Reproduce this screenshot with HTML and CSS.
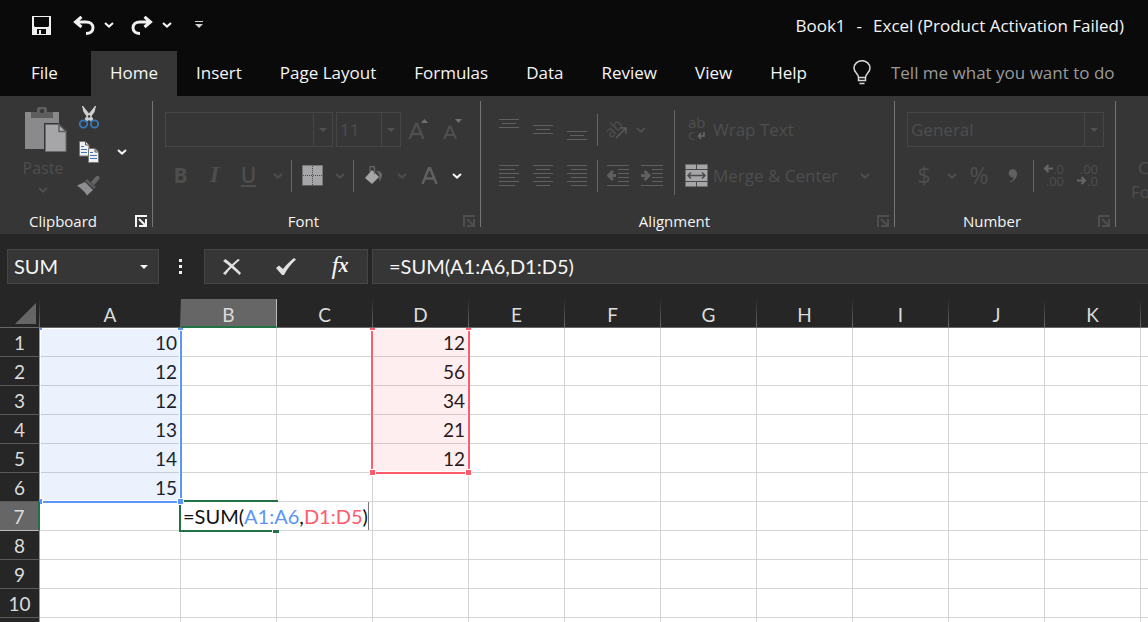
FILE: index.html
```html
<!DOCTYPE html>
<html lang="en">
  <head>
    <meta charset="UTF-8" />
    <meta name="viewport" content="width=device-width, initial-scale=1.0" />
    <title>Book1 - Excel</title>
    <link rel="stylesheet" href="styles.css">
  </head>
  <body>
    <!-- shared icons -->
    <svg class="sprite" width="0" height="0" aria-hidden="true">
      <symbol id="chevron" viewBox="0 0 10 6">
        <path d="M1 1l4 3.600L9 1" fill="none" stroke="currentColor" stroke-width="2" />
      </symbol>
      <symbol id="triangle" viewBox="0 0 8 4">
        <path d="M0 0h8L4 4z" fill="currentColor" />
      </symbol>
      <symbol id="launcher" viewBox="0 0 12 12">
        <path d="M1 12V1h11M4 4l6 6M11 4v7H4" fill="none" stroke="currentColor" stroke-width="2" />
      </symbol>
    </svg>

    <header class="titlebar">
      <div class="quick-access">
        <button class="quick save" aria-label="Save">
          <svg width="19" height="19" viewBox="0 0 19 19">
            <path fill="#f0f0f0" fill-rule="evenodd" d="M0 0h19v19H0zM2 1v9l1 1h13l1-1V1zM5 13v5h2v-4h2v4h5v-5z" />
          </svg>
        </button>
        <button class="quick" aria-label="Undo">
          <svg width="22" height="19" viewBox="0 0 22 19">
            <path d="M2 6h11c4.500 0 7 2.500 7 5.800 0 3.600-3 5.700-7 5.700M8.500 0.800L2.500 6l6 5" fill="none" stroke="#f0f0f0" stroke-width="3" />
          </svg>
        </button>
        <button class="quick" aria-label="Undo list">
          <svg width="10" height="6"><use href="#chevron" /></svg>
        </button>
        <button class="quick redo" aria-label="Redo">
          <svg width="22" height="19" viewBox="0 0 22 19">
            <path d="M20 6H9c-4.500 0-7 2.500-7 5.800 0 3.600 3 5.700 7 5.700M13.500 0.800l6 5.200-6 5" fill="none" stroke="#f0f0f0" stroke-width="3" />
          </svg>
        </button>
        <button class="quick" aria-label="Redo list">
          <svg width="10" height="6"><use href="#chevron" /></svg>
        </button>
        <button class="quick customize" aria-label="Customize Quick Access Toolbar">
          <svg width="8" height="8" viewBox="0 0 8 8">
            <path d="M0 0h8v1H0zM0 3h8L4 7z" fill="#d0d0d0" />
          </svg>
        </button>
      </div>
      <div class="title"><span>Book1</span><span>-</span><span>Excel (Product Activation Failed)</span></div>
    </header>

    <nav class="tabs">
      <a href="#" class="tab file">File</a>
      <a href="#" class="tab active">Home</a>
      <a href="#" class="tab">Insert</a>
      <a href="#" class="tab">Page Layout</a>
      <a href="#" class="tab">Formulas</a>
      <a href="#" class="tab">Data</a>
      <a href="#" class="tab">Review</a>
      <a href="#" class="tab">View</a>
      <a href="#" class="tab">Help</a>
      <label class="tell-me" for="tellMe">
        <svg width="18" height="25" viewBox="0 0 18 25">
          <path d="M5.500 17.500c0-4-4.500-4.500-4.500-9.500a8 7.300 0 0 1 16 0c0 5-4.500 5.500-4.500 9.500zM5.500 17v3.500h7V17M6.500 23.500h5" fill="none" stroke="#d8d8d8" stroke-width="1.500" />
        </svg>
        <input type="text" id="tellMe" placeholder="Tell me what you want to do" />
      </label>
    </nav>

    <section class="ribbon">
      <div class="group clipboard">
        <div class="group-body">
          <button class="paste" disabled>
            <svg width="42" height="46" viewBox="0 0 42 46">
              <path d="M0 5h34v37H0z" fill="#8a8a8c" />
              <path d="M6 5h6V1.500L13.500 0h7L22 1.500V5h6v6H6z" fill="#5e5e5e" />
              <circle cx="17" cy="4" r="2" fill="#363636" />
              <path d="M19 16h16l7 7v23H19z" fill="#363636" />
              <path d="M20.500 17.500H34V24h7v20.500H20.500z" fill="#a6a6a8" />
              <path d="M34 17.500v7h7z" fill="#b4b4b4" stroke="#5e5e5e" stroke-width="1.500" />
              <path d="M20.500 17.500H34M41 24v20.500H20.500v-27" fill="none" stroke="#6a6a6a" />
            </svg>
            <span>Paste</span>
            <svg width="10" height="6"><use href="#chevron" /></svg>
          </button>
          <div class="clip-tools">
            <button aria-label="Cut">
              <svg width="20" height="23" viewBox="0 0 20 23">
                <path d="M3.500 0L5 6l6.500 9 2.500-2zM16.500 0L15 6l-6.500 9L6 13z" fill="#d0d0d0" stroke="#d0d0d0" />
                <circle cx="4.500" cy="18" r="3.700" fill="#363636" stroke="#3a78b8" stroke-width="1.800" />
                <circle cx="15.500" cy="18" r="3.700" fill="#363636" stroke="#3a78b8" stroke-width="1.800" />
              </svg>
            </button>
            <button class="copy" aria-label="Copy">
              <svg width="20" height="22" viewBox="0 0 20 22">
                <path d="M.5.5h6l3.500 3.500v11H.5z" fill="#f0f0f0" stroke="#777" />
                <path d="M6.500.5V4H10" fill="none" stroke="#555" />
                <path d="M2 5.500h3M2 8.500h6M2 11.500h6" stroke="#3a78b8" />
                <path d="M9.500 7.500h6.500l3.500 3.500v10.500h-10z" fill="#f0f0f0" stroke="#777" />
                <path d="M16 7.500V11h3.500" fill="none" stroke="#555" />
                <path d="M11 11.500h3M11 14.500h7M11 17.500h7" stroke="#3a78b8" />
              </svg>
            </button>
            <button class="copy-list" aria-label="Copy options">
              <svg width="10" height="6"><use href="#chevron" /></svg>
            </button>
            <button aria-label="Format Painter" disabled>
              <svg width="24" height="21" viewBox="0 0 24 21">
                <path d="M14 7l5-5.500q1.500-1.500 3 0t0 3L17 10z" fill="#666" />
                <path d="M10 4l9 8-2 2-9-8z" fill="#5a5a5a" />
                <path d="M8 7l8 8-6 5.500C8 17 4 13 0 10.500z" fill="#8e8e90" />
              </svg>
            </button>
          </div>
        </div>
        <div class="caption">
          <span>Clipboard</span>
          <button aria-label="Clipboard settings"><svg width="12" height="12"><use href="#launcher" /></svg></button>
        </div>
      </div>

      <div class="group font">
        <div class="group-body rows">
          <div class="row">
            <div class="combo font-name">
              <select aria-label="Font" disabled><option></option></select>
              <span class="arrow"><svg width="8" height="4"><use href="#triangle" /></svg></span>
            </div>
            <div class="combo font-size">
              <select aria-label="Font size" disabled><option>11</option></select>
              <span class="arrow"><svg width="8" height="4"><use href="#triangle" /></svg></span>
            </div>
            <button class="tool" aria-label="Increase font size" disabled>
              <svg width="20" height="22" viewBox="0 0 20 22">
                <path d="M1.500 20L8 5h1l6.500 15M4 15h9" fill="none" stroke="currentColor" stroke-width="2.500" />
                <path d="M13 4h7l-3.500-4z" fill="#707070" />
              </svg>
            </button>
            <button class="tool" aria-label="Decrease font size" disabled>
              <svg width="20" height="22" viewBox="0 0 20 22">
                <path d="M2 20L7.500 7.500h1L14 20M4 16h8" fill="none" stroke="currentColor" stroke-width="2.200" />
                <path d="M13 0h7l-3.500 4z" fill="#707070" />
              </svg>
            </button>
          </div>
          <div class="row">
            <button class="tool bold" disabled>B</button>
            <button class="tool italic" disabled>I</button>
            <button class="tool underline" disabled>U</button>
            <button class="drop" aria-label="Underline styles" disabled><svg width="10" height="6"><use href="#chevron" /></svg></button>
            <span class="sep"></span>
            <button class="tool" aria-label="Borders" disabled>
              <svg width="21" height="21" viewBox="0 0 21 21">
                <path d="M0 0h21v20H0z" fill="#a6a6a8" />
                <path d="M.5.5h20v19M.5.5v19M10.500 1v19M1 10.500h19" fill="none" stroke="#4a4a4a" stroke-dasharray="1 1" />
                <path d="M0 20.500h21" stroke="#5e5e5e" />
              </svg>
            </button>
            <button class="drop" aria-label="Border list" disabled><svg width="10" height="6"><use href="#chevron" /></svg></button>
            <span class="sep"></span>
            <button class="tool" aria-label="Fill color" disabled>
              <svg width="18" height="19" viewBox="0 0 18 19">
                <path d="M7 4l7 7-7 7-7-6z" fill="#a6a6a8" />
                <path d="M5 6V1.500Q5 .5 6 .5h2.500q1 0 1 1V8" fill="none" stroke="#686868" stroke-width="1.300" />
                <path d="M11 5c4 0 6 1 6 4 0 3-2 4-2 7-2-4 1-7-4-11z" fill="#666" />
              </svg>
            </button>
            <button class="drop" aria-label="Fill color list" disabled><svg width="10" height="6"><use href="#chevron" /></svg></button>
            <button class="tool" aria-label="Font color" disabled>
              <svg width="17" height="17" viewBox="0 0 17 17">
                <path d="M1.500 17L8 1h1l6.500 16M4 11.500h9" fill="none" stroke="#606060" stroke-width="2.500" />
              </svg>
            </button>
            <button class="drop" aria-label="Font color list"><svg width="10" height="6"><use href="#chevron" /></svg></button>
          </div>
        </div>
        <div class="caption">
          <span>Font</span>
          <button aria-label="Font settings" disabled><svg width="12" height="12"><use href="#launcher" /></svg></button>
        </div>
      </div>

      <div class="group alignment">
        <div class="group-body">
          <div class="rows">
            <div class="row">
              <button class="tool" aria-label="Top align" disabled>
                <svg width="20" height="22" viewBox="0 0 20 22"><path d="M0 .5h20M3 4.500h14M0 8.500h20" stroke="#606060" /></svg>
              </button>
              <button class="tool" aria-label="Middle align" disabled>
                <svg width="20" height="22" viewBox="0 0 20 22"><path d="M0 6.500h20M3 10.500h14M0 14.500h20" stroke="#606060" /></svg>
              </button>
              <button class="tool" aria-label="Bottom align" disabled>
                <svg width="20" height="22" viewBox="0 0 20 22"><path d="M0 12.500h20M3 16.500h14M0 20.500h20" stroke="#606060" /></svg>
              </button>
              <span class="sep"></span>
              <button class="tool orientation" aria-label="Orientation" disabled>
                <span class="slanted">ab</span>
                <svg width="12" height="12" viewBox="0 0 12 12"><path d="M1 11L10.500 1.500M5 1h6v6" fill="none" stroke="#5a5a5a" stroke-width="1.500" /></svg>
              </button>
              <button class="drop narrow" aria-label="Orientation list" disabled><svg width="10" height="6"><use href="#chevron" /></svg></button>
            </div>
            <div class="row">
              <button class="tool" aria-label="Align left" disabled>
                <svg width="20" height="21" viewBox="0 0 20 21"><path d="M0 .5h20M0 4.500h16M0 8.500h20M0 12.500h16M0 16.500h20M0 20.500h16" stroke="#606060" /></svg>
              </button>
              <button class="tool" aria-label="Center" disabled>
                <svg width="20" height="21" viewBox="0 0 20 21"><path d="M0 .5h20M3 4.500h14M0 8.500h20M3 12.500h14M0 16.500h20M3 20.500h14" stroke="#606060" /></svg>
              </button>
              <button class="tool" aria-label="Align right" disabled>
                <svg width="20" height="21" viewBox="0 0 20 21"><path d="M0 .5h20M4 4.500h16M0 8.500h20M4 12.500h16M0 16.500h20M4 20.500h16" stroke="#606060" /></svg>
              </button>
              <span class="sep"></span>
              <button class="tool" aria-label="Decrease indent" disabled>
                <svg width="22" height="21" viewBox="0 0 22 21">
                  <path d="M0 .5h22M11 4.500h11M11 8.500h11M11 12.500h11M11 16.500h11M0 20.500h22" stroke="#606060" />
                  <path d="M9 10.500H2M6 6l-4.500 4.500L6 15" fill="none" stroke="#606060" stroke-width="3" />
                </svg>
              </button>
              <button class="tool" aria-label="Increase indent" disabled>
                <svg width="22" height="21" viewBox="0 0 22 21">
                  <path d="M0 .5h22M11 4.500h11M11 8.500h11M11 12.500h11M11 16.500h11M0 20.500h22" stroke="#606060" />
                  <path d="M0 10.500h7M3.500 6L8 10.500 3.500 15" fill="none" stroke="#606060" stroke-width="3" />
                </svg>
              </button>
            </div>
          </div>
          <span class="tall-sep"></span>
          <div class="rows wide">
            <button class="wide-tool" disabled>
              <span class="wrap-icon">
                <span>ab</span>
                <span>c<svg width="8" height="8" viewBox="0 0 8 8"><path d="M7 0v4H2M4 1L1.500 4 4 7" fill="none" stroke="#6a6a6a" stroke-width="1.500" /></svg></span>
              </span>
              <span>Wrap Text</span>
            </button>
            <div class="row">
              <button class="wide-tool merge" disabled>
                <svg width="24" height="24" viewBox="0 0 24 24">
                  <path d="M.5.5h22v22H.5z" fill="#a6a6a8" stroke="#6e6e6e" />
                  <path d="M0 5.500h23M0 17.500h23M11.500 0v5M11.500 18v5" stroke="#4a4a4a" />
                  <path d="M3 11.500h17M6 8.500l-3 3 3 3M17 8.500l3 3-3 3" fill="none" stroke="#4a4a4a" stroke-width="1.500" />
                </svg>
                <span>Merge &amp; Center</span>
              </button>
              <button class="drop" aria-label="Merge list" disabled><svg width="10" height="6"><use href="#chevron" /></svg></button>
            </div>
          </div>
        </div>
        <div class="caption">
          <span>Alignment</span>
          <button aria-label="Alignment settings" disabled><svg width="12" height="12"><use href="#launcher" /></svg></button>
        </div>
      </div>

      <div class="group number">
        <div class="group-body rows">
          <div class="row">
            <div class="combo number-format">
              <select aria-label="Number format" disabled><option>General</option></select>
              <span class="arrow"><svg width="8" height="4"><use href="#triangle" /></svg></span>
            </div>
          </div>
          <div class="row">
            <button class="tool symbol" disabled>$</button>
            <button class="drop" aria-label="Accounting formats" disabled><svg width="10" height="6"><use href="#chevron" /></svg></button>
            <button class="tool symbol" disabled>%</button>
            <button class="tool" aria-label="Comma style" disabled>
              <svg width="10" height="14" viewBox="0 0 10 14"><path d="M4.500 0a4.500 4.500 0 0 1 4.500 5c0 4-3 7-7 8.500v-1c2-1 3.500-2 3.500-4A4.200 4.200 0 1 1 4.500 0z" fill="#606060" /></svg>
            </button>
            <span class="sep"></span>
            <button class="tool decimals" aria-label="Increase decimal" disabled>
              <span><svg width="10" height="9" viewBox="0 0 10 9"><path d="M10 4.500H2M5.500 1L2 4.500 5.500 8" fill="none" stroke="#666" stroke-width="2" /></svg>.0</span>
              <span>.00</span>
            </button>
            <button class="tool decimals" aria-label="Decrease decimal" disabled>
              <span>.00</span>
              <span><svg width="10" height="9" viewBox="0 0 10 9"><path d="M0 4.500h8M4.500 1L8 4.500 4.500 8" fill="none" stroke="#666" stroke-width="2" /></svg>.0</span>
            </button>
          </div>
        </div>
        <div class="caption">
          <span>Number</span>
          <button aria-label="Number settings" disabled><svg width="12" height="12"><use href="#launcher" /></svg></button>
        </div>
      </div>

      <div class="group styles">
        <button class="conditional" disabled><span>Conditional</span><span>Formatting</span></button>
      </div>
    </section>

    <section class="formula-bar">
      <div class="name-box">
        <input type="text" aria-label="Name Box" value="SUM" />
        <button aria-label="Names list"><svg width="8" height="4"><use href="#triangle" /></svg></button>
      </div>
      <span class="dots"></span>
      <div class="formula-tools">
        <button aria-label="Cancel">
          <svg width="18" height="16" viewBox="0 0 18 16">
            <path d="M0 2L2.500 0C8 4 13 9 18 14l-1.500 2C11 11 6 6 0 2z" fill="#e0e0e0" />
            <path d="M15 0l2 1C12 5 6 11 2.500 16L0 14.500C5 9 10 4 15 0z" fill="#e0e0e0" />
          </svg>
        </button>
        <button aria-label="Enter">
          <svg width="20" height="17" viewBox="0 0 20 17">
            <path d="M0 10l3-2.500 4 3.500C10 7 14 3 18 0l2 1.500C15 6 11 11 8 17H6z" fill="#e0e0e0" />
          </svg>
        </button>
        <button class="fx" aria-label="Insert Function"><span>f</span><span class="fx-small">x</span></button>
      </div>
      <input class="formula" type="text" aria-label="Formula Bar" value="=SUM(A1:A6,D1:D5)" />
    </section>

    <main class="sheet">
      <table>
        <colgroup>
          <col class="col-head" />
          <col class="col-a" />
          <col span="11" class="col" />
        </colgroup>
        <thead>
          <tr>
            <th class="corner"><svg width="21" height="21" viewBox="0 0 21 21"><path d="M21 0v21H0z" fill="#666" /></svg></th>
            <th>A</th><th class="current">B</th><th>C</th><th>D</th><th>E</th><th>F</th>
            <th>G</th><th>H</th><th>I</th><th>J</th><th>K</th><th></th>
          </tr>
        </thead>
        <tbody>
          <tr><th>1</th><td>10</td><td></td><td></td><td>12</td><td></td><td></td><td></td><td></td><td></td><td></td><td></td><td></td></tr>
          <tr><th>2</th><td>12</td><td></td><td></td><td>56</td><td></td><td></td><td></td><td></td><td></td><td></td><td></td><td></td></tr>
          <tr><th>3</th><td>12</td><td></td><td></td><td>34</td><td></td><td></td><td></td><td></td><td></td><td></td><td></td><td></td></tr>
          <tr><th>4</th><td>13</td><td></td><td></td><td>21</td><td></td><td></td><td></td><td></td><td></td><td></td><td></td><td></td></tr>
          <tr><th>5</th><td>14</td><td></td><td></td><td>12</td><td></td><td></td><td></td><td></td><td></td><td></td><td></td><td></td></tr>
          <tr><th>6</th><td>15</td><td></td><td></td><td></td><td></td><td></td><td></td><td></td><td></td><td></td><td></td><td></td></tr>
          <tr><th class="current">7</th><td></td><td></td><td></td><td></td><td></td><td></td><td></td><td></td><td></td><td></td><td></td><td></td></tr>
          <tr><th>8</th><td></td><td></td><td></td><td></td><td></td><td></td><td></td><td></td><td></td><td></td><td></td><td></td></tr>
          <tr><th>9</th><td></td><td></td><td></td><td></td><td></td><td></td><td></td><td></td><td></td><td></td><td></td><td></td></tr>
          <tr><th>10</th><td></td><td></td><td></td><td></td><td></td><td></td><td></td><td></td><td></td><td></td><td></td><td></td></tr>
          <tr><th></th><td></td><td></td><td></td><td></td><td></td><td></td><td></td><td></td><td></td><td></td><td></td><td></td></tr>
        </tbody>
      </table>

      <div class="cell-cursor"></div>
      <div class="cell-editor" role="textbox" aria-label="B7" contenteditable="true" spellcheck="false">=SUM(<span class="ref-a">A1:A6</span>,<span class="ref-d">D1:D5</span>)</div>

      <!-- ranges referenced by the formula -->
      <div class="range range-a"><i></i><i></i><i></i><i></i></div>
      <div class="range range-d"><i></i><i></i><i></i><i></i></div>
    </main>
  </body>
</html>
```
FILE: styles.css
```css
* {
  box-sizing: border-box;
}

body {
  margin: 0;
  height: 100vh;
  display: flex;
  flex-direction: column;
  overflow: hidden;
  background: #0a0a0a;
  color: #f5f5f5;
  font-family: "Open Sans", sans-serif;
  font-size: 17px;
}

button,
input,
select {
  font: inherit;
  color: inherit;
  background: none;
  border: none;
  padding: 0;
  margin: 0;
  outline: none;
}

button {
  display: flex;
  align-items: center;
  justify-content: center;
}

button:disabled,
select:disabled {
  color: #4e4e4e;
  opacity: 1;
}

svg {
  display: block;
  flex: none;
}

.sprite {
  position: absolute;
}

/* title bar */
.titlebar {
  flex: none;
  height: 51px;
  display: flex;
  align-items: center;
  justify-content: space-between;
  padding: 0 24px 1px 32px;
}

.quick-access {
  display: flex;
  align-items: center;
  gap: 9px;
}

.quick.save {
  margin-right: 13px;
}

.quick.redo {
  margin-left: 8px;
}

.quick.customize {
  margin-left: 14px;
}

.title {
  display: flex;
  gap: 11px;
}

/* tabs */
.tabs {
  flex: none;
  height: 45px;
  display: flex;
}

.tab {
  display: flex;
  align-items: center;
  padding: 0 19px 2px;
  color: #f5f5f5;
  text-decoration: none;
  white-space: nowrap;
}

.tab.file {
  padding: 0 33px 2px 31px;
}

.tab.active {
  background: #363636;
}

.tell-me {
  flex: 1;
  display: flex;
  align-items: center;
  gap: 20px;
  padding: 0 0 2px 27px;
}

.tell-me input {
  flex: 1;
  min-width: 0;
}

.tell-me input::placeholder {
  color: #9a9a9a;
  opacity: 1;
}

/* ribbon */
.ribbon {
  flex: none;
  display: flex;
  padding: 5px 0 7px;
  background: #363636;
  overflow: hidden;
}

.group {
  flex: none;
  display: flex;
  flex-direction: column;
  justify-content: space-between;
  height: 126px;
  border-right: 1px solid #757575;
}

.group-body {
  display: flex;
}

.rows {
  display: flex;
  flex-direction: column;
  gap: 11px;
  padding-top: 11px;
}

.row {
  display: flex;
  align-items: center;
  height: 35px;
}

.caption {
  display: flex;
  align-items: center;
  height: 12px;
  font-size: 15px;
}

.caption span {
  flex: 1;
  text-align: center;
}

.caption button {
  width: 26px;
  padding-left: 4px;
}

.tool {
  width: 34px;
  height: 32px;
}

.drop {
  width: 21px;
  height: 32px;
}

.drop.narrow {
  width: 11px;
}

.sep {
  width: 1px;
  height: 32px;
  margin: 0 3px;
  background: #666;
}

.combo {
  display: flex;
  height: 35px;
  border: 1px solid #464646;
}

.combo select {
  flex: 1;
  min-width: 0;
  padding-left: 3px;
  appearance: none;
}

.combo .arrow {
  width: 19px;
  display: flex;
  align-items: center;
  justify-content: center;
  border-left: 1px solid #464646;
  color: #505050;
}

.clipboard {
  width: 153px;
}

.clipboard .group-body {
  align-items: flex-start;
}

.paste {
  flex-direction: column;
  width: 50px;
  margin: 6px 0 0 18px;
  gap: 4px;
  font-size: 16px;
  line-height: 22px;
}

.paste svg:first-child {
  margin-left: 6px;
}

.paste span {
  margin-bottom: 4px;
}

.clip-tools {
  display: grid;
  grid-template-columns: 24px 24px;
  grid-template-rows: 23px 22px 21px;
  gap: 12px 9px;
  margin: 5px 0 0 9px;
}

.clip-tools button:first-child {
  grid-column: 1 / 3;
  justify-self: start;
  width: 24px;
}

.font {
  width: 328px;
}

.font .rows,
.number .rows {
  padding-left: 12px;
}

.font-name {
  width: 168px;
  margin-right: 3px;
}

.font-size {
  width: 65px;
}

.bold,
.italic,
.underline {
  padding: 0 3px 2px 0;
  font-size: 21px;
  font-weight: bold;
}

.italic {
  font-family: "Liberation Serif", serif;
  font-size: 24px;
  font-style: italic;
}

.underline {
  font-weight: 600;
  text-decoration: underline;
}

.alignment {
  width: 414px;
}

.alignment .rows {
  padding-left: 11px;
}

.tall-sep {
  width: 1px;
  height: 85px;
  margin: 9px 0 0 5px;
  background: #666;
}

.alignment .rows.wide {
  padding-left: 10px;
}

.wide-tool {
  height: 35px;
  gap: 4px;
  justify-content: flex-start;
}

.merge {
  width: 169px;
}

.wrap-icon {
  display: flex;
  flex-direction: column;
  width: 24px;
  padding: 0 0 4px 3px;
  font-size: 15px;
  line-height: 12px;
  text-align: left;
}

.wrap-icon span {
  display: flex;
  align-items: flex-end;
  gap: 2px;
}

.orientation {
  position: relative;
}

.slanted {
  margin: 0 10px 4px 0;
  font-size: 16px;
  line-height: 14px;
  rotate: -45deg;
}

.orientation svg {
  position: absolute;
  left: 14px;
  top: 13px;
}

.number {
  width: 221px;
}

.number-format {
  width: 197px;
}

.symbol {
  padding-bottom: 2px;
  font-size: 23px;
}

.decimals {
  flex-direction: column;
  align-items: flex-end;
  padding: 0 7px 2px 0;
  font-size: 13px;
  line-height: 12px;
}

.decimals span {
  display: flex;
  align-items: center;
}

.styles {
  justify-content: flex-start;
  padding: 55px 0 0 15px;
  border-right: none;
}

.conditional {
  flex-direction: column;
  align-items: flex-start;
  line-height: 24px;
}

.conditional span:first-child {
  padding-left: 7px;
}

/* formula bar */
.formula-bar {
  flex: none;
  display: flex;
  align-items: center;
  height: 65px;
  padding-left: 7px;
  background: #262626;
  font-family: Lato, sans-serif;
  font-size: 20px;
}

.name-box,
.formula-tools,
.formula {
  height: 35px;
  background: #363636;
  border: 1px solid #464646;
}

.name-box {
  display: flex;
  width: 152px;
}

.name-box input {
  flex: 1;
  min-width: 0;
  padding: 0 0 2px 6px;
}

.name-box button {
  width: 28px;
}

.dots {
  width: 3px;
  height: 15px;
  margin: 0 22px 0 20px;
  background: repeating-linear-gradient(#f0f0f0 0 3px, transparent 3px 6px);
}

.formula-tools {
  display: flex;
  width: 164px;
  margin-right: 4px;
}

.formula-tools button {
  flex: 1;
}

.fx {
  padding-bottom: 2px;
  font-family: "Liberation Serif", serif;
  font-size: 26px;
  font-style: italic;
}

.fx-small {
  font-size: 20px;
  font-weight: bold;
}

.formula {
  flex: 1;
  min-width: 0;
  padding: 0 0 2px 16px;
  border-right: none;
}

/* sheet */
.sheet {
  flex: 1;
  min-height: 0;
  position: relative;
  overflow: hidden;
  background: #fff;
  color: #111;
  font-family: Lato, sans-serif;
  font-size: 19px;
}

.sheet table {
  width: 1237px;
  table-layout: fixed;
  border-collapse: separate;
  border-spacing: 0;
}

.col-head {
  width: 40px;
}

.col-a {
  width: 141px;
}

.col {
  width: 96px;
}

.sheet th,
.sheet td {
  height: 29px;
  padding: 2px 0 0;
  line-height: 26px;
}

.sheet td {
  padding-right: 3px;
  text-align: right;
  border-right: 1px solid #d4d4d4;
  border-bottom: 1px solid #d4d4d4;
}

/* headers stay above the range outlines */
.sheet th {
  position: relative;
  z-index: 1;
  background: #262626;
  color: #dcdcdc;
  font-weight: normal;
}

.sheet thead th {
  padding-top: 5px;
  line-height: 22px;
  vertical-align: top;
  border-right: 1px solid;
  border-image: linear-gradient(#262626, #6a6a6a) 1;
  border-bottom: 1px solid #9a9a9a;
}

.sheet tbody th {
  border-right: 1px solid #9a9a9a;
  border-bottom: 1px solid #5a5a5a;
}

.sheet thead th.current {
  background: #666;
  border-image: none;
  border-right: 1px solid #bbb;
  border-bottom: 2px solid #217346;
}

.sheet tbody th.current {
  background: #666;
  border-right: 2px solid #217346;
  border-bottom: 1px solid #bbb;
}

.sheet thead th.corner {
  padding-top: 4px;
}

.corner svg {
  margin-left: 15px;
}

.range {
  position: absolute;
  top: 29px;
  border: 2px solid;
  border-top: none;
  box-shadow: inset 0 0 0 1px #fff;
}

.range i {
  position: absolute;
  width: 5px;
  height: 5px;
  background: currentColor;
  outline: 1px solid #fff;
}

.range i:nth-child(1) {
  left: -3px;
  top: -3px;
}

.range i:nth-child(2) {
  right: -3px;
  top: -3px;
}

.range i:nth-child(3) {
  left: -3px;
  bottom: -3px;
}

.range i:nth-child(4) {
  right: -3px;
  bottom: -3px;
}

.range-a {
  left: 38px;
  width: 144px;
  height: 175px;
  color: #5b95f9;
  background: rgba(91, 149, 249, 0.12);
}

.range-d {
  left: 371px;
  width: 99px;
  height: 146px;
  color: #ff5b6b;
  background: rgba(255, 91, 107, 0.1);
}

.cell-cursor {
  position: absolute;
  left: 179px;
  top: 201px;
  width: 99px;
  height: 32px;
  border: 2px solid #217346;
  border-right: none;
}

.cell-cursor::after {
  content: "";
  position: absolute;
  right: -1px;
  bottom: -3px;
  width: 6px;
  height: 4px;
  background: #217346;
  border-left: 1px solid #fff;
}

.cell-editor {
  position: absolute;
  left: 181px;
  top: 203px;
  height: 28px;
  padding: 1px 0 0 2px;
  border-right: 1px solid #777;
  background: #fff;
  font-size: 20px;
  line-height: 27px;
  white-space: nowrap;
}

.ref-a {
  color: #5b95f9;
}

.ref-d {
  color: #ff5b6b;
}
```
